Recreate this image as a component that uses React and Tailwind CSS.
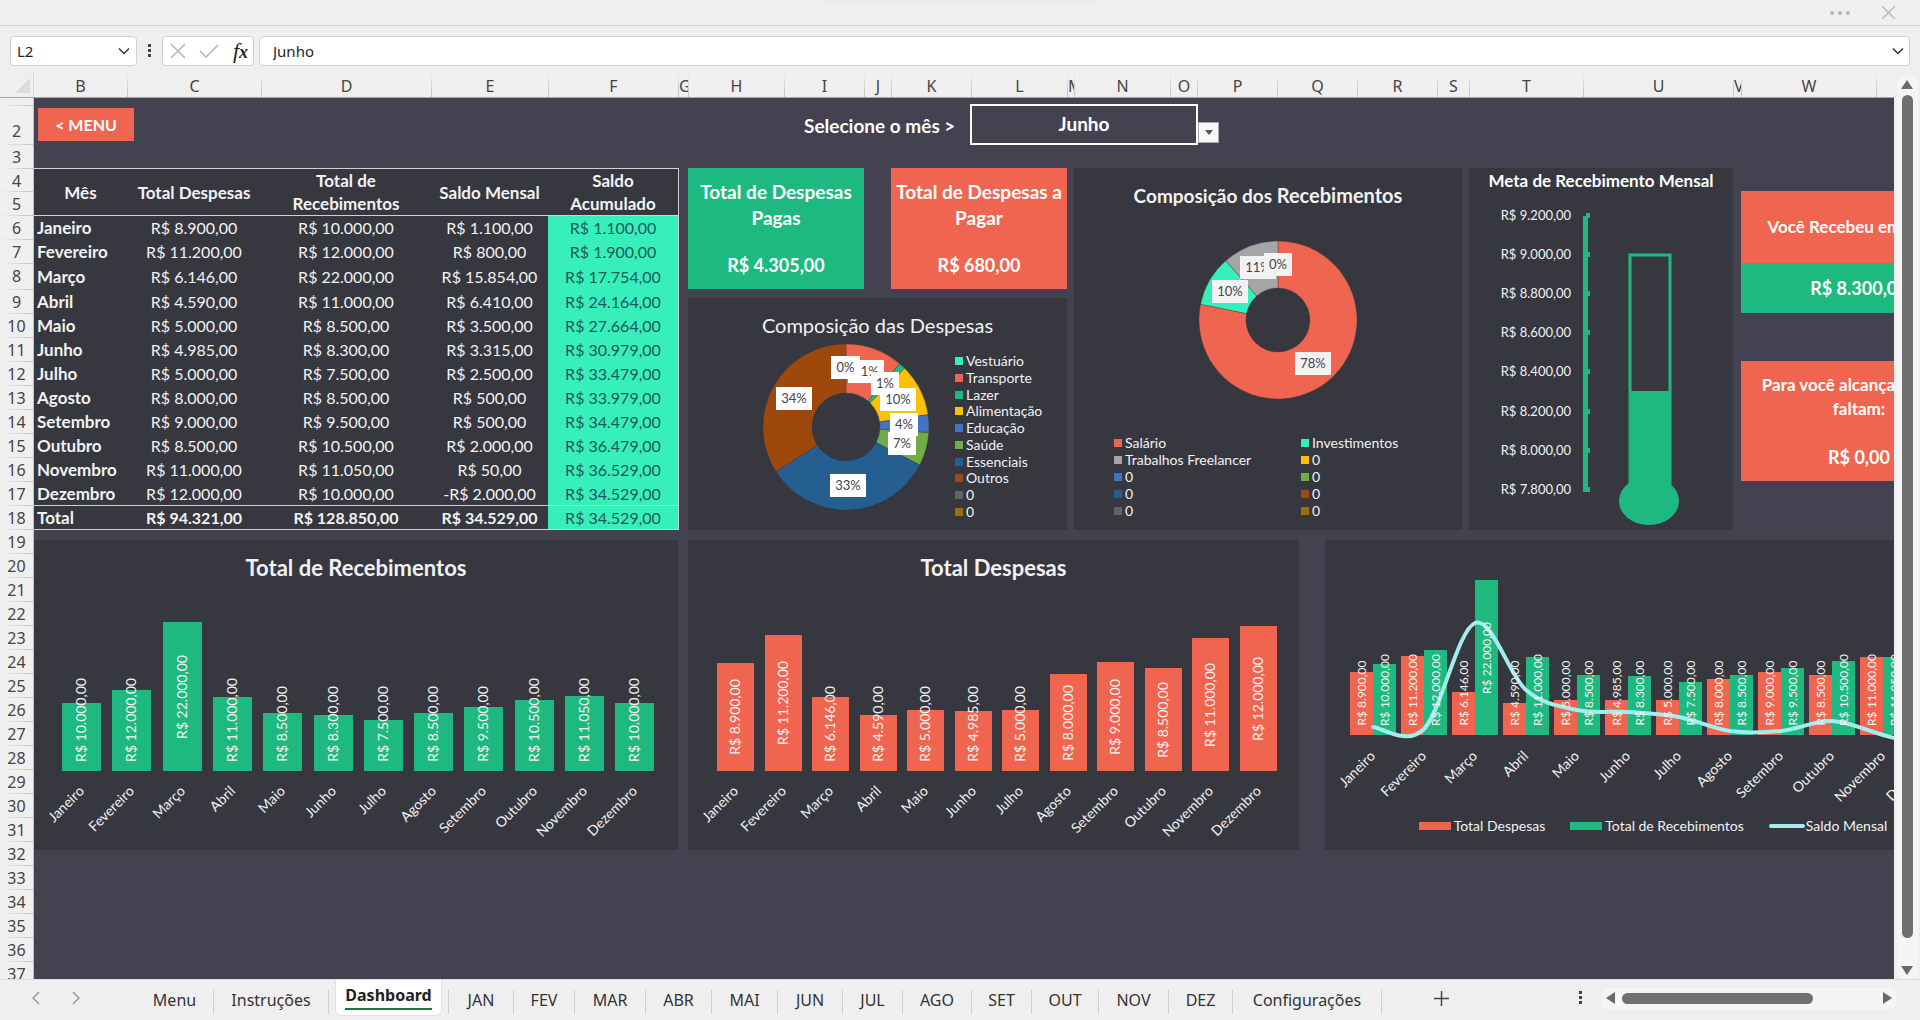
import React, { useState } from 'react';

const MONTHS = [
  { name: 'Janeiro', despesas: 8900, recebimentos: 10000, saldo: 1100, acumulado: 1100 },
  { name: 'Fevereiro', despesas: 11200, recebimentos: 12000, saldo: 800, acumulado: 1900 },
  { name: 'Março', despesas: 6146, recebimentos: 22000, saldo: 15854, acumulado: 17754 },
  { name: 'Abril', despesas: 4590, recebimentos: 11000, saldo: 6410, acumulado: 24164 },
  { name: 'Maio', despesas: 5000, recebimentos: 8500, saldo: 3500, acumulado: 27664 },
  { name: 'Junho', despesas: 4985, recebimentos: 8300, saldo: 3315, acumulado: 30979 },
  { name: 'Julho', despesas: 5000, recebimentos: 7500, saldo: 2500, acumulado: 33479 },
  { name: 'Agosto', despesas: 8000, recebimentos: 8500, saldo: 500, acumulado: 33979 },
  { name: 'Setembro', despesas: 9000, recebimentos: 9500, saldo: 500, acumulado: 34479 },
  { name: 'Outubro', despesas: 8500, recebimentos: 10500, saldo: 2000, acumulado: 36479 },
  { name: 'Novembro', despesas: 11000, recebimentos: 11050, saldo: 50, acumulado: 36529 },
  { name: 'Dezembro', despesas: 12000, recebimentos: 10000, saldo: -2000, acumulado: 34529 },
];

const COLUMNS = [
  ['B', 'w-[94px]'], ['C', 'w-[134px]'], ['D', 'w-[170px]'], ['E', 'w-[117px]'], ['F', 'w-[130px]'],
  ['G', 'w-[10px]'], ['H', 'w-[96px]'], ['I', 'w-[80px]'], ['J', 'w-[27px]'], ['K', 'w-[80px]'],
  ['L', 'w-[96px]'], ['M', 'w-[7px]'], ['N', 'w-[96px]'], ['O', 'w-[27px]'], ['P', 'w-[80px]'],
  ['Q', 'w-[80px]'], ['R', 'w-[80px]'], ['S', 'w-[32px]'], ['T', 'w-[114px]'], ['U', 'w-[150px]'],
  ['V', 'w-[8px]'], ['W', 'w-[135px]'],
];

// rows that are not the default 24px high
const ROW_HEIGHTS = { 1: 'h-[8px]', 2: 'h-[39px]', 4: 'h-[23px]', 8: 'h-[26px]' };
const ROWS = Array.from({ length: 37 }, (_, i) => i + 1);

const TABS = [
  ['Menu', 'w-[78px]'], ['Instruções', 'w-[115px]'], ['Dashboard', 'w-[120px]'], ['JAN', 'w-[65px]'],
  ['FEV', 'w-[61px]'], ['MAR', 'w-[71px]'], ['ABR', 'w-[66px]'], ['MAI', 'w-[66px]'], ['JUN', 'w-[65px]'],
  ['JUL', 'w-[60px]'], ['AGO', 'w-[69px]'], ['SET', 'w-[60px]'], ['OUT', 'w-[67px]'], ['NOV', 'w-[70px]'],
  ['DEZ', 'w-[64px]'], ['Configurações', 'w-[149px]'],
];

const CORAL = '#f0654f';
const GREEN = '#1eb980';
const MINT = '#37efba';

const money = (v) => {
  const digits = String(Math.abs(v)).replace(/\B(?=(\d{3})+$)/g, '.');
  return `${v < 0 ? '-' : ''}R$ ${digits},00`;
};

const point = (cx, cy, r, fraction) => {
  const a = fraction * Math.PI * 2;
  return `${(cx + r * Math.sin(a)).toFixed(1)} ${(cy - r * Math.cos(a)).toFixed(1)}`;
};

const slicePath = (cx, cy, outer, inner, from, to) => {
  const large = to - from > 0.5 ? 1 : 0;
  return `M${point(cx, cy, outer, from)} A${outer} ${outer} 0 ${large} 1 ${point(cx, cy, outer, to)} L${point(cx, cy, inner, to)} A${inner} ${inner} 0 ${large} 0 ${point(cx, cy, inner, from)} Z`;
};

const Donut = ({ cx, cy, outer, inner, slices, labels, labelFill, className, label }) => (
  <svg className={className} role="img" aria-label={label}>
    {slices.map(([from, to, color]) => (
      <path key={color} d={slicePath(cx, cy, outer, inner, from, to)} fill={color} stroke="#37373f" strokeOpacity="0.35" />
    ))}
    {labels.map(([text, x, y, w]) => (
      <g key={text}>
        <rect x={x} y={y} width={w} height="23" fill={labelFill} />
        <text x={x + w / 2} y={y + 16} textAnchor="middle" fontSize="13" fill="#44424f">{text}</text>
      </g>
    ))}
  </svg>
);

const LegendItem = ({ color, text }) => (
  <li className="flex min-h-0 flex-1 items-center gap-[3px] text-sm leading-none whitespace-nowrap text-[#f2f2f2]">
    <svg width="8" height="8" className="shrink-0"><rect width="8" height="8" fill={color} /></svg>
    {text}
  </li>
);

const ValueLabel = ({ value, x, top, base, size }) => {
  const length = (value >= 10000 ? 5.9 : 5.33) * size;
  const y = Math.round(Math.min((top + base) / 2, base - 10 - length / 2));
  return (
    <text transform={`translate(${x} ${y}) rotate(-90)`} textAnchor="middle" fontSize={size} fill="#f2f2f2">
      {money(value)}
    </text>
  );
};

const MonthLabel = ({ name, x, y }) => (
  <text transform={`translate(${x} ${y}) rotate(-45)`} textAnchor="end" fontSize="14" fill="#f2f2f2">{name}</text>
);

const BarChart = ({ title, field, color, start, step, barWidth, scale }) => (
  <section className="flex h-[310px] flex-col bg-[#37373f]">
    <h2 className="pt-3 text-center text-[22px] leading-8 font-bold text-[#f2f2f2]">{title}</h2>
    <svg className="w-full flex-1" role="img" aria-label={title}>
      {MONTHS.map((m, i) => {
        const x = Math.round(start + i * step);
        const height = Math.round(m[field] * scale);
        return (
          <g key={m.name}>
            <rect x={x} y={187 - height} width={barWidth} height={height} fill={color} />
            <ValueLabel value={m[field]} x={x + Math.round(barWidth / 2) + 4} top={187 - height} base={187} size={14} />
            <MonthLabel name={m.name} x={x + Math.round(barWidth / 2) + 3} y={208} />
          </g>
        );
      })}
    </svg>
  </section>
);

// smooth curve through the monthly balance
const curve = (pts) => {
  let d = `M${pts[0][0]} ${pts[0][1]}`;
  for (let i = 0; i < pts.length - 1; i++) {
    const p0 = pts[i - 1] || pts[i];
    const [p1, p2] = [pts[i], pts[i + 1]];
    const p3 = pts[i + 2] || p2;
    d += ` C${p1[0] + (p2[0] - p0[0]) / 6} ${p1[1] + (p2[1] - p0[1]) / 6} ${p2[0] - (p3[0] - p1[0]) / 6} ${p2[1] - (p3[1] - p1[1]) / 6} ${p2[0]} ${p2[1]}`;
  }
  return d;
};

const ComboChart = () => {
  const base = 195;
  const bars = MONTHS.map((m, i) => ({
    ...m,
    x: Math.round(25 + i * 51),
    topD: base - Math.round(m.despesas * 0.00705),
    topR: base - Math.round(m.recebimentos * 0.00705),
  }));
  const line = bars.map((b) => [b.x + 23, Math.round(base - b.saldo * 0.00705)]);
  return (
    <section className="flex h-[310px] w-[656px] shrink-0 flex-col bg-[#37373f]">
      <svg className="w-full flex-1" role="img" aria-label="Despesas, recebimentos e saldo mensal">
        {bars.map((b) => (
          <g key={b.name}>
            <rect x={b.x} y={b.topD} width="23" height={base - b.topD} fill={CORAL} />
            <rect x={b.x + 23} y={b.topR} width="23" height={base - b.topR} fill={GREEN} />
            <MonthLabel name={b.name} x={b.x + 26} y={217} />
          </g>
        ))}
        <path d={curve(line)} fill="none" stroke="#a3edef" strokeWidth="4" strokeLinecap="round" />
        {bars.map((b) => (
          <g key={b.name}>
            <ValueLabel value={b.despesas} x={b.x + 16} top={b.topD} base={base} size={12} />
            <ValueLabel value={b.recebimentos} x={b.x + 39} top={b.topR} base={base} size={12} />
          </g>
        ))}
      </svg>
      <ul className="flex justify-center gap-[25px] pb-4 text-sm leading-4 whitespace-nowrap text-[#f2f2f2]">
        <li className="flex items-center gap-[3px]"><span className="h-2 w-8 bg-[#f0654f]" />Total Despesas</li>
        <li className="flex items-center gap-[3px]"><span className="h-2 w-8 bg-[#1eb980]" />Total de Recebimentos</li>
        <li className="flex items-center gap-[1px]"><span className="h-1 w-9 rounded-full bg-[#a3edef]" />Saldo Mensal</li>
      </ul>
    </section>
  );
};

const SummaryTable = () => (
  <table className="w-[645px] shrink-0 table-fixed border-collapse border-r border-[#d0d0d4] bg-[#37373f] text-center text-base leading-[23px] text-[#f2f2f2]">
    <colgroup>
      <col className="w-[93px]" />
      <col className="w-[134px]" />
      <col className="w-[170px]" />
      <col className="w-[117px]" />
      <col />
    </colgroup>
    <thead>
      <tr className="h-[47px] border-y border-[#d0d0d4] text-[17px]">
        {['Mês', 'Total Despesas', 'Total de Recebimentos', 'Saldo Mensal', 'Saldo Acumulado'].map((h) => (
          <th key={h} scope="col" className="px-5 py-0 leading-[23px] first:px-0 nth-2:px-0 nth-4:px-0">{h}</th>
        ))}
      </tr>
    </thead>
    <tbody>
      {MONTHS.map((m) => (
        <tr key={m.name} className="h-6 nth-3:h-[26px]">
          <th scope="row" className="p-0 pl-[3px] text-left text-[17px]">{m.name}</th>
          <td className="p-0">{money(m.despesas)}</td>
          <td className="p-0">{money(m.recebimentos)}</td>
          <td className="p-0">{money(m.saldo)}</td>
          <td className="bg-[#37efba] p-0 text-[#1c5a5c]">{money(m.acumulado)}</td>
        </tr>
      ))}
    </tbody>
    <tfoot>
      <tr className="h-6 border-y border-[#d0d0d4] font-bold">
        <th scope="row" className="p-0 pl-[3px] text-left text-[17px]">Total</th>
        <td className="p-0">{money(94321)}</td>
        <td className="p-0">{money(128850)}</td>
        <td className="p-0">{money(34529)}</td>
        <td className="bg-[#37efba] p-0 font-normal text-[#1c5a5c]">{money(34529)}</td>
      </tr>
    </tfoot>
  </table>
);

const TotalCard = ({ title, value, className }) => (
  <section className={`flex h-[121px] w-[176px] flex-col items-center justify-between pt-[11px] pb-3 text-center font-bold text-white ${className}`}>
    <h2 className="text-[19px] leading-[26px]">{title}</h2>
    <p className="text-lg leading-6">{value}</p>
  </section>
);

const ExpensesDonut = () => (
  <section className="h-[232px] w-[379px] bg-[#37373f]">
    <h2 className="pt-[11px] pb-px text-center text-xl leading-8 text-[#f2f2f2]">Composição das Despesas</h2>
    <div className="flex">
      <Donut
        className="h-[187px] w-[267px]"
        label="Composição das Despesas"
        cx={158} cy={85} outer={83} inner={34}
        labelFill="#ffffff"
        slices={[
          [0, 0.112, CORAL], [0.112, 0.125, GREEN], [0.125, 0.226, '#ffc000'], [0.226, 0.261, '#4472c4'],
          [0.261, 0.326, '#70ad47'], [0.326, 0.66, '#255e91'], [0.66, 1, '#9e480e'],
        ]}
        labels={[
          ['11%', 160, 18, 36], ['0%', 143, 14, 29], ['1%', 183, 30, 28], ['10%', 192, 46, 36],
          ['4%', 202, 71, 28], ['7%', 200, 90, 28], ['33%', 142, 132, 36], ['34%', 88, 45, 36],
        ]}
      />
      <ul className="mt-[11px] flex h-[167px] flex-col">
        <LegendItem color={MINT} text="Vestuário" />
        <LegendItem color={CORAL} text="Transporte" />
        <LegendItem color={GREEN} text="Lazer" />
        <LegendItem color="#ffc000" text="Alimentação" />
        <LegendItem color="#4472c4" text="Educação" />
        <LegendItem color="#70ad47" text="Saúde" />
        <LegendItem color="#255e91" text="Essenciais" />
        <LegendItem color="#9e480e" text="Outros" />
        <LegendItem color="#636363" text="0" />
        <LegendItem color="#997300" text="0" />
      </ul>
    </div>
  </section>
);

const IncomeDonut = () => (
  <section className="flex h-[362px] w-[388px] shrink-0 flex-col bg-[#37373f]">
    <h2 className="pt-[11px] pb-px text-center text-[19px] leading-8 font-bold text-[#f2f2f2]">
      Composição dos <span className="text-xl leading-8">Recebimentos</span>
    </h2>
    <Donut
      className="w-full flex-1"
      label="Composição dos Recebimentos"
      cx={204} cy={107} outer={79} inner={32}
      labelFill="#f2f2f2"
      slices={[[0, 0.782, CORAL], [0.782, 0.885, MINT], [0.885, 1, '#a5a5a5']]}
      labels={[['78%', 221, 139, 36], ['11%', 166, 43, 36], ['10%', 138, 67, 36], ['0%', 190, 40, 28]]}
    />
    <div className="flex pb-[11px] pl-10">
      <ul className="flex h-[84px] w-[187px] flex-col">
        <LegendItem color={CORAL} text="Salário" />
        <LegendItem color="#a5a5a5" text="Trabalhos Freelancer" />
        <LegendItem color="#4472c4" text="0" />
        <LegendItem color="#255e91" text="0" />
        <LegendItem color="#636363" text="0" />
      </ul>
      <ul className="flex h-[84px] flex-col">
        <LegendItem color={MINT} text="Investimentos" />
        <LegendItem color="#ffc000" text="0" />
        <LegendItem color="#70ad47" text="0" />
        <LegendItem color="#9e480e" text="0" />
        <LegendItem color="#997300" text="0" />
      </ul>
    </div>
  </section>
);

const Thermometer = () => {
  const ticks = [9200, 9000, 8800, 8600, 8400, 8200, 8000, 7800];
  return (
    <section className="flex h-[362px] w-[264px] shrink-0 flex-col bg-[#37373f]">
      <h2 className="pt-px pb-px text-center text-[17px] leading-6 font-bold text-white">Meta de Recebimento Mensal</h2>
      <svg className="w-full flex-1" role="img" aria-label="Meta de Recebimento Mensal">
        {ticks.map((t, i) => {
          const y = 22 + Math.round(i * 39.1);
          return (
            <g key={t}>
              <text x="102" y={y + 4} textAnchor="end" fontSize="13" fill="#f2f2f2">{money(t)}</text>
              <rect x="117" y={y - 3} width="4" height="5" fill={GREEN} />
            </g>
          );
        })}
        <rect x="114" y="22" width="5" height="276" fill={GREEN} />
        <rect x="161" y="61" width="40" height="230" fill="none" stroke={GREEN} strokeWidth="3" />
        <rect x="160" y="197" width="42" height="100" fill={GREEN} />
        <ellipse cx="180" cy="307" rx="30" ry="24" fill={GREEN} />
      </svg>
    </section>
  );
};

const GoalCards = () => (
  <div className="ml-px flex w-[236px] shrink-0 flex-col pt-[23px] text-center font-bold text-white">
    <div className="flex h-[72px] items-center justify-center bg-[#f0654f] text-[17px]">Você Recebeu em Junho</div>
    <div className="flex h-[50px] items-center justify-center bg-[#1eb980] text-lg">R$ 8.300,00</div>
    <div className="mt-12 flex h-[120px] flex-col items-center justify-between bg-[#f0654f] pt-3 pb-3">
      <p className="px-3 text-[17px] leading-6">Para você alcançar a meta faltam:</p>
      <p className="text-lg leading-6">R$ 0,00</p>
    </div>
  </div>
);

const TopBar = ({ month, onMonth }) => (
  <div className="flex h-[70px] items-start">
    <button type="button" className="mt-[10px] ml-1 h-[33px] w-24 bg-[#f0654f] text-base font-bold text-white">&lt; MENU</button>
    <label htmlFor="month" className="mt-4 ml-[670px] w-[150px] text-[19px] leading-6 font-bold whitespace-nowrap text-white">Selecione o mês &gt;</label>
    <div className="relative mt-[6px] ml-4 w-[228px]">
      <select
        id="month"
        value={month}
        onChange={(e) => onMonth(e.target.value)}
        className="h-[41px] w-full appearance-none border-2 border-white bg-[#444250] text-center text-[19px] font-bold text-white [text-align-last:center]"
      >
        {MONTHS.map((m) => <option key={m.name}>{m.name}</option>)}
      </select>
      <span className="pointer-events-none absolute top-[18px] left-full flex h-[21px] w-[21px] items-center justify-center border border-[#ababab] bg-[#f7f7fa]">
        <svg width="8" height="5"><path d="M0 0h8L4 5z" fill="#555" /></svg>
      </span>
    </div>
  </div>
);

const Chevron = ({ className }) => (
  <svg viewBox="0 0 12 8" width="12" height="8" className={className} fill="none" stroke="#333" strokeWidth="1.5">
    <path d="M1 1.5l5 5 5-5" />
  </svg>
);

const FormulaBar = ({ month, onMonth }) => (
  <div className="flex h-[46px] shrink-0 items-center pt-1 pr-[10px] pl-[10px] font-['Noto_Sans',sans-serif]">
    <div className="flex h-[30px] w-[127px] items-center rounded border border-[#d1d1d1] bg-white pr-1.5 pl-1.5">
      <input aria-label="Caixa de nome" defaultValue="L2" className="w-full min-w-0 text-[15px] text-[#262626] outline-none" />
      <button type="button" aria-label="Abrir caixa de nome"><Chevron /></button>
    </div>
    <svg width="25" height="16" className="shrink-0" fill="#444">
      <rect x="11" y="1" width="3" height="3" /><rect x="11" y="6" width="3" height="3" /><rect x="11" y="11" width="3" height="3" />
    </svg>
    <div className="flex h-[30px] w-[92px] shrink-0 items-center justify-between rounded border border-[#d1d1d1] bg-white pr-[5px] pl-[7px]">
      <button type="button" aria-label="Cancelar">
        <svg width="16" height="16" fill="none" stroke="#b5b5b5" strokeWidth="1.5"><path d="M1 1l14 14M15 1L1 15" /></svg>
      </button>
      <button type="button" aria-label="Inserir">
        <svg width="20" height="14" fill="none" stroke="#b5b5b5" strokeWidth="1.5"><path d="M1 7l6 6L19 1" /></svg>
      </button>
      <button type="button" aria-label="Inserir função" className="font-['Liberation_Serif',serif] text-[22px] leading-5 text-[#222] italic">
        f<span className="text-lg leading-5 font-bold">x</span>
      </button>
    </div>
    <div className="ml-[5px] flex h-[30px] flex-1 items-center rounded border border-[#d1d1d1] bg-white pr-[5px] pl-[13px]">
      <input aria-label="Barra de fórmulas" value={month} onChange={(e) => onMonth(e.target.value)} className="w-full text-[15px] text-[#262626] outline-none" />
      <button type="button" aria-label="Expandir barra de fórmulas"><Chevron /></button>
    </div>
  </div>
);

const SheetTabs = () => {
  const [active, setActive] = useState('Dashboard');
  return (
    <footer className="flex h-[41px] shrink-0 border-t border-[#dcdcdc] font-['Noto_Sans',sans-serif] text-base text-[#333]">
      <div className="flex w-[136px] shrink-0 items-center gap-[32px] pb-1 pl-8">
        <button type="button" aria-label="Planilha anterior">
          <svg width="8" height="14" fill="none" stroke="#999" strokeWidth="1.5"><path d="M7 1L1 7l6 6" /></svg>
        </button>
        <button type="button" aria-label="Próxima planilha">
          <svg width="8" height="14" fill="none" stroke="#999" strokeWidth="1.5"><path d="M1 1l6 6-6 6" /></svg>
        </button>
      </div>
      <nav className="flex items-start">
        {TABS.map(([name, width]) => (
          <div key={name} className={`flex h-9 shrink-0 items-center ${width}`}>
            {name === active ? (
              <button type="button" onClick={() => setActive(name)} className="mx-auto h-9 rounded-b-md border border-t-0 border-[#e0e0e0] bg-white px-[9px] pb-1 font-bold text-[#222]">
                <span className="block border-b-2 border-[#107c41] leading-[26px]">{name}</span>
              </button>
            ) : (
              <button type="button" onClick={() => setActive(name)} className="h-full flex-1 pt-[3px]">{name}</button>
            )}
            <span className="mt-2 h-6 w-px bg-[#d0d0d0]" />
          </div>
        ))}
      </nav>
      <button type="button" aria-label="Nova planilha" className="mb-1 ml-[52px]">
        <svg width="15" height="15" stroke="#444" strokeWidth="1.5"><path d="M7.5 0v15M0 7.5h15" /></svg>
      </button>
      <div className="mr-6 mb-1 ml-auto flex items-center gap-[19px]">
        <svg width="4" height="14" fill="#444"><rect width="3" height="3" /><rect y="5" width="3" height="3" /><rect y="10" width="3" height="3" /></svg>
        <div className="flex h-[21px] w-[294px] items-center rounded-md bg-[#f5f5f5] px-1">
          <svg width="9" height="12" fill="#6a6a6a"><path d="M9 0v12L0 6z" /></svg>
          <span className="ml-[7px] h-[11px] w-[191px] rounded-full bg-[#707070]" />
          <svg width="9" height="12" fill="#6a6a6a" className="ml-auto"><path d="M0 0v12l9-6z" /></svg>
        </div>
      </div>
    </footer>
  );
};

const App = () => {
  const [month, setMonth] = useState('Junho');
  return (
    <div className="flex h-screen flex-col overflow-hidden bg-[#efefef] font-['Lato','Liberation_Sans',sans-serif]">
      <header className="relative flex h-[26px] shrink-0 items-center justify-end gap-8 border-b border-[#d1d1d1] pr-[25px]">
        <span className="absolute top-0 left-1/2 h-[3px] w-[270px] -translate-x-1/2 rounded-b bg-[#ebebeb]" />
        <button type="button" aria-label="Mais opções">
          <svg width="20" height="4" fill="#b5b5b5"><circle cx="2" cy="2" r="2" /><circle cx="10" cy="2" r="2" /><circle cx="18" cy="2" r="2" /></svg>
        </button>
        <button type="button" aria-label="Fechar">
          <svg width="13" height="13" fill="none" stroke="#bbb" strokeWidth="1.5"><path d="M0 0l13 13M13 0L0 13" /></svg>
        </button>
      </header>

      <FormulaBar month={month} onMonth={setMonth} />

      <div className="flex min-h-0 flex-1">
        <div className="flex min-w-0 flex-1 flex-col">
          {/* Column headers */}
          <div className="flex h-[26px] shrink-0 items-end overflow-hidden border-b border-[#a6a6a6] font-['Noto_Sans',sans-serif] text-base leading-[26px] text-[#444]">
            <div className="flex h-full w-[34px] shrink-0 items-end justify-end border-r border-[#d4d4d4] pr-[3px] pb-1">
              <svg width="15" height="15"><path d="M15 0v15H0z" fill="#dcdcdc" /></svg>
            </div>
            {COLUMNS.map(([letter, width]) => (
              <div key={letter} className={`flex h-6 shrink-0 overflow-hidden ${width}`}>
                <span className="min-w-0 flex-1 text-center">{letter}</span>
                <span className="w-px shrink-0 bg-linear-to-b from-[#efefef] to-[#bdbdbd]" />
              </div>
            ))}
          </div>

          <div className="flex min-h-0 flex-1 overflow-hidden">
            {/* Row headers */}
            <div className="w-[34px] shrink-0 overflow-hidden border-r border-[#c4c4c4] font-['Noto_Sans',sans-serif] text-base leading-[25px] text-[#444]">
              {ROWS.map((n) => (
                <div key={n} className={`flex flex-col justify-end overflow-hidden text-center ${ROW_HEIGHTS[n] || 'h-6'}`}>
                  <span className="min-h-0">{n === 1 ? '' : n}</span>
                  <span className="h-px shrink-0 bg-linear-to-r from-[#efefef] to-[#c4c4c4]" />
                </div>
              ))}
            </div>

            <main className="min-w-0 flex-1 overflow-hidden bg-[#444250]">
              <TopBar month={month} onMonth={setMonth} />
              <div className="flex h-[362px] items-start">
                <SummaryTable />
                <div className="ml-[9px] flex w-[379px] shrink-0 flex-col gap-[9px]">
                  <div className="flex justify-between">
                    <TotalCard title="Total de Despesas Pagas" value="R$ 4.305,00" className="bg-[#1eb980] px-2" />
                    <TotalCard title="Total de Despesas a Pagar" value="R$ 680,00" className="bg-[#f0654f]" />
                  </div>
                  <ExpensesDonut />
                </div>
                <div className="ml-[7px] flex gap-[7px]">
                  <IncomeDonut />
                  <Thermometer />
                  <GoalCards />
                </div>
              </div>
              <div className="flex pt-[10px]">
                <div className="w-[644px] shrink-0">
                  <BarChart title="Total de Recebimentos" field="recebimentos" color={GREEN} start={28} step={50.3} barWidth={39} scale={0.00677} />
                </div>
                <div className="ml-[10px] w-[611px] shrink-0">
                  <BarChart title="Total Despesas" field="despesas" color={CORAL} start={29} step={47.5} barWidth={37} scale={0.0121} />
                </div>
                <div className="ml-[26px]">
                  <ComboChart />
                </div>
              </div>
            </main>
          </div>
        </div>

        {/* Vertical scrollbar */}
        <div className="flex w-[26px] shrink-0 justify-center">
          <div className="mt-1 flex w-[21px] flex-col items-center rounded-lg bg-[#f5f5f5] pt-1 pb-1">
            <svg width="12" height="9" fill="#6a6a6a"><path d="M6 0l6 9H0z" /></svg>
            <span className="mt-[6px] h-[843px] w-[11px] rounded-full bg-[#707070]" />
            <svg width="12" height="9" fill="#6a6a6a" className="mt-auto"><path d="M0 0h12L6 9z" /></svg>
          </div>
        </div>
      </div>

      <SheetTabs />
    </div>
  );
};

export default App;
